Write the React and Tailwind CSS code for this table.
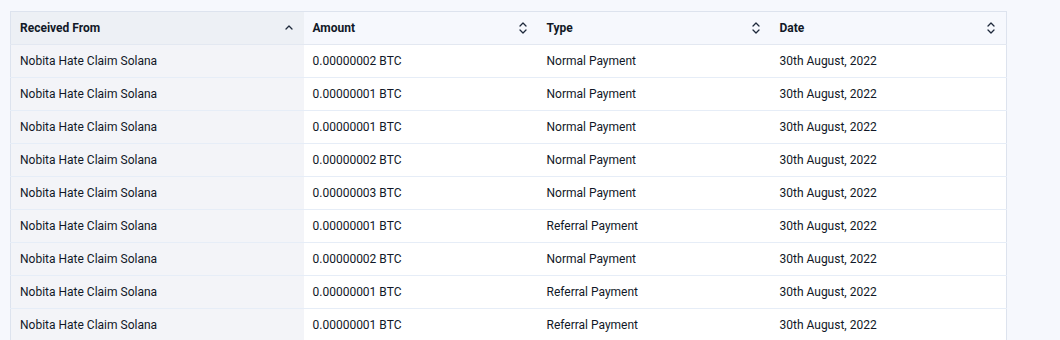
import React from "react";

const rows = [
  ["0.00000002 BTC", "Normal Payment"],
  ["0.00000001 BTC", "Normal Payment"],
  ["0.00000001 BTC", "Normal Payment"],
  ["0.00000002 BTC", "Normal Payment"],
  ["0.00000003 BTC", "Normal Payment"],
  ["0.00000001 BTC", "Referral Payment"],
  ["0.00000002 BTC", "Normal Payment"],
  ["0.00000001 BTC", "Referral Payment"],
  ["0.00000001 BTC", "Referral Payment"],
];

function SortUp() {
  return (
    <svg width="10" height="12" viewBox="0 0 10 12" fill="none">
      <path d="M2 7 L5 4 L8 7" stroke="#1e293b" strokeWidth="1.3" strokeLinecap="round" strokeLinejoin="round" />
    </svg>
  );
}

function SortBoth() {
  return (
    <svg width="10" height="14" viewBox="0 0 10 14" fill="none">
      <path d="M2 5 L5 2 L8 5" stroke="#1e293b" strokeWidth="1.3" strokeLinecap="round" strokeLinejoin="round" />
      <path d="M2 9 L5 12 L8 9" stroke="#1e293b" strokeWidth="1.3" strokeLinecap="round" strokeLinejoin="round" />
    </svg>
  );
}

function Header({ label, sorted }) {
  return (
    <th className={`h-[33px] pl-[9px] pr-[10px] text-left font-bold border-b border-[#e3e8f1] ${sorted ? "bg-[#edf0f5]" : "bg-[#f6f8fd]"}`}>
      <div className="flex items-center justify-between">
        <span>{label}</span>
        {sorted ? <SortUp /> : <SortBoth />}
      </div>
    </th>
  );
}

export default function App() {
  return (
    <div className="h-[340px] w-[1060px] overflow-hidden bg-[#f6f8fd] pt-[11px] pl-[10px]" style={{ fontFamily: "Roboto, 'Liberation Sans', sans-serif" }}>
      <table className="table-fixed border-collapse w-[996px] border border-[#dde3ee] text-[12px] text-[#111827]">
        <colgroup>
          <col className="w-[293px]" />
          <col className="w-[234px]" />
          <col className="w-[233px]" />
          <col className="w-[236px]" />
        </colgroup>
        <thead>
          <tr>
            <Header label="Received From" sorted />
            <Header label="Amount" />
            <Header label="Type" />
            <Header label="Date" />
          </tr>
        </thead>
        <tbody>
          {rows.map(([amount, type], i) => (
            <tr key={i} className="h-[33px] border-b border-[#e6edf7]">
              <td className="pl-[9px] pr-[10px] bg-[#f3f4f8]">Nobita Hate Claim Solana</td>
              <td className="pl-[9px] pr-[10px] bg-white">{amount}</td>
              <td className="pl-[9px] pr-[10px] bg-white">{type}</td>
              <td className="pl-[9px] pr-[10px] bg-white">30th August, 2022</td>
            </tr>
          ))}
        </tbody>
      </table>
    </div>
  );
}
